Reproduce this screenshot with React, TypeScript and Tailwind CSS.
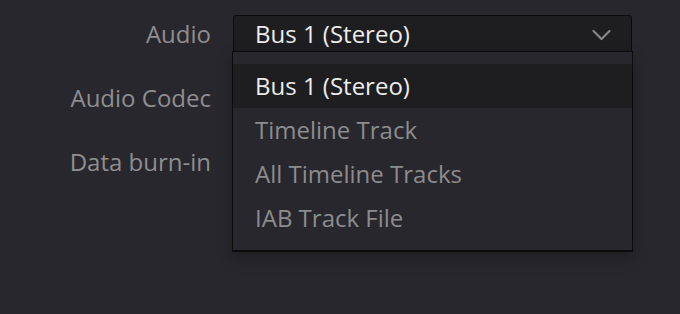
const fields = ['Audio', 'Audio Codec', 'Data burn-in'];
const options = ['Bus 1 (Stereo)', 'Timeline Track', 'All Timeline Tracks', 'IAB Track File'];

function Chevron() {
  return (
    <svg width="19" height="12" viewBox="0 0 19 12" fill="none" className="mt-[2px]">
      <polyline points="1.5,2 9.5,10 17.5,2" stroke="#858588" strokeWidth="2.2" strokeLinecap="round" strokeLinejoin="round" />
    </svg>
  );
}

function AudioSelect() {
  return (
    <div className="relative w-[399px]">
      <div className="flex h-[37px] items-center justify-between rounded-t-[3px] border border-[#0b0b0c] bg-[#1e1e20] pl-[21px] pr-[20px] text-[#ececec]">
        <span>{options[0]}</span>
        <Chevron />
      </div>

      {/* open list */}
      <div className="absolute left-[-1px] top-[36px] z-10 w-[401px] border border-b-2 border-[#0b0b0c] bg-[#28272d] pt-[12px] pb-[10px] shadow-[0_6px_14px_rgba(0,0,0,0.25)]">
        {options.map((opt, i) => (
          <div
            key={opt}
            className={
              i === 0
                ? 'flex h-[44px] items-center bg-[#1e1e20] pl-[22px] text-[#ececec]'
                : 'flex h-[44px] items-center pl-[22px] text-[#8c8c8e]'
            }
          >
            {opt}
          </div>
        ))}
      </div>
    </div>
  );
}

export default function App() {
  return (
    <div
      className="h-[314px] w-[680px] overflow-hidden bg-[#28272d] pt-[15px] text-[24px] leading-none"
      style={{ fontFamily: '"Open Sans", "Noto Sans", sans-serif' }}
    >
      <div className="flex flex-col gap-[27px]">
        {fields.map((label, i) => (
          <div key={label} className="flex h-[37px] items-center gap-[22px]">
            <div className="w-[211px] text-right text-[#8e8e90]">{label}</div>
            {i === 0 && <AudioSelect />}
          </div>
        ))}
      </div>
    </div>
  );
}
